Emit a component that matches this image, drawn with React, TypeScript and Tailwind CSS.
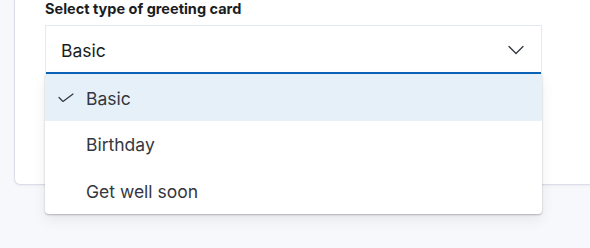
import React from 'react';

const options = ['Basic', 'Birthday', 'Get well soon'];

const Check = () => (
  <svg width="16" height="16" viewBox="0 0 16 16" fill="none" className="shrink-0">
    <path d="M1 8.5l4 4L15 5" stroke="#343741" strokeWidth="1.2" strokeLinecap="round" strokeLinejoin="round" />
  </svg>
);

const Chevron = () => (
  <svg width="16" height="10" viewBox="0 0 16 10" fill="none">
    <path d="M1 1.5l7 7 7-7" stroke="#343741" strokeWidth="1.3" strokeLinecap="round" strokeLinejoin="round" />
  </svg>
);

export default function App() {
  return (
    <div
      className="relative h-[248px] w-[590px] overflow-hidden bg-[#f7f8fc]"
      style={{ fontFamily: 'Inter, "Noto Sans", sans-serif' }}
    >
      <div className="ml-[14px] h-[185px] w-[620px] rounded-bl-[6px] border border-t-0 border-[#d9dee8] bg-white pl-[30px] shadow-[0_1px_3px_rgba(0,0,0,0.05)]">
        <label className="block text-[14.5px] font-bold leading-[17px] text-[#1a1c21]">
          Select type of greeting card
        </label>
        <div className="relative mt-[8px] w-[497px]">
          <div className="flex h-[49px] items-center justify-between border border-b-0 border-[#e4e8ef] bg-white pl-[15px] pr-[17px] shadow-[inset_0_-2px_0_#0b64b8]">
            <span className="pt-[2px] text-[17.5px] text-[#1a1c21]">Basic</span>
            <Chevron />
          </div>
          <ul className="absolute left-0 top-[49px] z-10 w-[497px] overflow-hidden rounded-b-[4px] bg-white shadow-[0_1px_2px_rgba(0,0,0,0.25),0_6px_14px_rgba(0,0,0,0.07)]">
            {options.map((o, i) => (
              <li
                key={o}
                className={
                  'flex h-[46.7px] items-center gap-[12px] pl-[13px] text-[17.5px] text-[#343741] ' +
                  (i === 0 ? 'bg-[#e6f0f8]' : '')
                }
              >
                <span className="flex w-[16px] justify-center">{i === 0 && <Check />}</span>
                <span className="pt-[3px]">{o}</span>
              </li>
            ))}
          </ul>
        </div>
      </div>
    </div>
  );
}
